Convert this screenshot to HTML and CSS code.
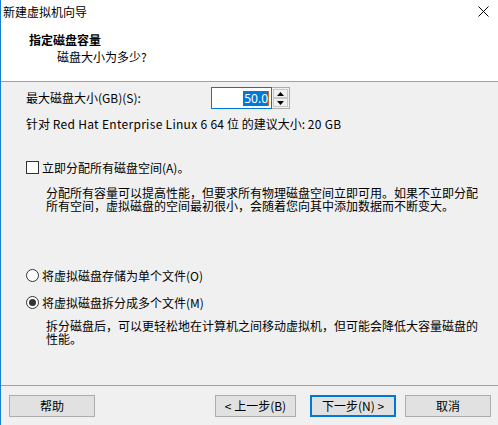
FILE: index.html
```html
<!DOCTYPE html>
<html lang="zh-CN">
<head>
<meta charset="utf-8">
<link rel="stylesheet" href="styles.css">
</head>
<body>
<div class="window">
  <div class="top">
    <div class="titlebar">
      <span class="title">新建虚拟机向导</span>
      <svg class="close" width="11" height="11" viewBox="0 0 11 11"><path d="M0.5 0.5 L10.5 10.5 M10.5 0.5 L0.5 10.5" stroke="#000" stroke-width="1" fill="none"/></svg>
    </div>
    <div class="header">
      <div class="h-title">指定磁盘容量</div>
      <div class="h-sub">磁盘大小为多少?</div>
    </div>
  </div>
  <div class="content">
    <div class="size-row">
      <span class="size-label">最大磁盘大小(GB)(S):</span>
      <div class="spin">
        <div class="spin-input"><span class="sel">50.0</span><span class="caret"></span></div>
        <div class="spin-btns">
          <div class="spin-btn"><svg width="7" height="4" viewBox="0 0 7 4"><path d="M3.5 0 L7 4 L0 4 Z" fill="#000"/></svg></div>
          <div class="spin-btn"><svg width="7" height="4" viewBox="0 0 7 4"><path d="M0 0 L7 0 L3.5 4 Z" fill="#000"/></svg></div>
        </div>
      </div>
    </div>
    <div class="recommend">针对 <span class="latin">Red Hat Enterprise Linux 6 64</span> 位 的建议大小: <span class="latin">20 GB</span></div>
    <div class="opt check-row">
      <span class="checkbox"></span>
      <span class="opt-label">立即分配所有磁盘空间(<span class="acc">A</span>)。</span>
    </div>
    <p class="desc desc1">分配所有容量可以提高性能，但要求所有物理磁盘空间立即可用。如果不立即分配所有空间，虚拟磁盘的空间最初很小，会随着您向其中添加数据而不断变大。</p>
    <div class="opt radio-row r1">
      <span class="radio"></span>
      <span class="opt-label">将虚拟磁盘存储为单个文件(<span class="acc">O</span>)</span>
    </div>
    <div class="opt radio-row r2">
      <span class="radio checked"></span>
      <span class="opt-label">将虚拟磁盘拆分成多个文件(<span class="acc">M</span>)</span>
    </div>
    <p class="desc desc2">拆分磁盘后，可以更轻松地在计算机之间移动虚拟机，但可能会降低大容量磁盘的性能。</p>
  </div>
  <div class="footer">
    <button class="btn help">帮助</button>
    <div class="spacer"></div>
    <button class="btn back">&lt; 上一步(B)</button>
    <button class="btn next default">下一步(N) &gt;</button>
    <button class="btn cancel">取消</button>
  </div>
</div>
</body>
</html>
```

FILE: styles.css
```css
* { box-sizing: border-box; }
html, body {
  margin: 0;
  padding: 0;
  width: 498px;
  height: 425px;
  overflow: hidden;
}
body {
  font-family: "Noto Sans CJK SC", "Noto Sans", sans-serif;
  font-size: 12px;
  color: #000;
  background: #f0f0f0;
}
.window {
  width: 498px;
  height: 425px;
  border-left: 1px solid #1a7fd4;
  display: flex;
  flex-direction: column;
  background: #f0f0f0;
}
.top {
  background: #fff;
  height: 82px;
  border-bottom: 1px solid #a0a0a0;
  flex: none;
}
.titlebar {
  height: 25px;
  display: flex;
  align-items: center;
  justify-content: space-between;
  padding: 0 9px 0 2px;
}
.title {
  line-height: 14px;
  margin-top: -1px;
}
.close {
  display: block;
  margin-top: -2px;
}
.header {
  padding-left: 28px;
  padding-top: 8px;
}
.h-title {
  font-weight: bold;
  line-height: 14px;
}
.h-sub {
  line-height: 14px;
  margin-top: 3px;
  padding-left: 28px;
}
.content {
  flex: 1;
  padding-left: 25px;
  padding-top: 5px;
}
.size-row {
  display: flex;
  align-items: center;
  height: 22px;
}
.size-label {
  width: 185px;
  line-height: 14px;
}
.spin {
  display: flex;
  height: 22px;
}
.spin-input {
  width: 61px;
  height: 22px;
  border: 1px solid #0078d7;
  background: #fff;
  display: flex;
  align-items: center;
  justify-content: flex-end;
  padding-right: 2px;
  font-family: "Noto Sans", sans-serif;
  font-size: 12px;
}
.sel {
  background: #0078d7;
  color: #fff;
  line-height: 15px;
  padding: 0 0 0 1px;
}
.caret {
  width: 1px;
  height: 15px;
  background: #d2691e;
}
.spin-btns {
  width: 18px;
  height: 22px;
  border: 1px solid #adadad;
  border-left: none;
  display: flex;
  flex-direction: column;
  background: #f0f0f0;
  padding: 1px;
}
.spin-btn {
  flex: 1;
  display: flex;
  align-items: center;
  justify-content: center;
  border: 1px solid #c8c8c8;
  background: #f0f0f0;
}
.spin-btn svg { display: block; }
.recommend {
  margin-top: 8px;
  line-height: 14px;
}
.latin {
  letter-spacing: 0.3px;
}
.opt {
  display: flex;
  align-items: center;
  height: 13px;
}
.check-row { margin-top: 30px; }
.checkbox {
  width: 13px;
  height: 13px;
  border: 1px solid #333;
  background: #fff;
  margin-right: 3px;
  flex: none;
}
.radio {
  width: 13px;
  height: 13px;
  border: 1px solid #333;
  border-radius: 50%;
  background: #fff;
  margin-right: 3px;
  flex: none;
  display: flex;
  align-items: center;
  justify-content: center;
}
.radio.checked::after {
  content: "";
  width: 7px;
  height: 7px;
  border-radius: 50%;
  background: #333;
}
.opt-label { line-height: 14px; }
.acc { color: #000; }
.desc {
  margin: 0;
  padding-left: 20px;
  width: 458px;
  line-height: 13px;
}
.desc1 { margin-top: 12px; }
.r1 { margin-top: 57px; }
.r2 { margin-top: 14px; }
.desc2 { margin-top: 10px; }
.footer {
  flex: none;
  height: 40px;
  border-top: 1px solid #a0a0a0;
  display: flex;
  align-items: flex-start;
  padding: 9px 7px 0 8px;
}
.spacer { flex: 1; }
.btn {
  font-family: "Noto Sans CJK SC", "Noto Sans", sans-serif;
  font-size: 12px;
  height: 22px;
  width: 86px;
  background: #e1e1e1;
  border: 1px solid #adadad;
  padding: 0;
  margin: 0;
  color: #000;
  line-height: 14px;
}
.back { width: 81px; margin-right: 14px; }
.next { margin-right: 9px; }
.default { border: 2px solid #0078d7; }
```
